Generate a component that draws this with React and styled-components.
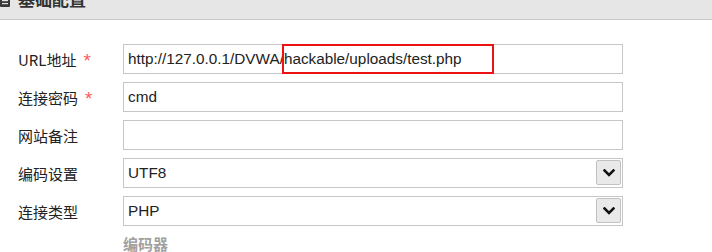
import React from "react";
import styled, { createGlobalStyle } from "styled-components";

const Global = createGlobalStyle`
  html, body { margin: 0; padding: 0; background: #fff; }
  body { font-family: "Liberation Sans", "Noto Sans CJK SC", sans-serif; color: #333; }
`;

const Page = styled.div`
  width: 712px;
  height: 252px;
  overflow: hidden;
  background: #fff;
`;

const Header = styled.div`
  height: 19px;
  border-bottom: 1px solid #c8c8c8;
  background: #e6e6e6;
  display: flex;
  align-items: flex-start;
  gap: 8px;
  overflow: hidden;
`;

const HeaderIcon = styled.svg`
  margin-top: -6px;
  flex: none;
`;

const Title = styled.div`
  margin-top: -11px;
  font-family: "Noto Sans CJK SC", sans-serif;
  font-size: 17px;
  font-weight: 700;
  line-height: 20px;
  color: #333;
`;

const Form = styled.div`
  padding-top: 24px;
  display: grid;
  grid-template-columns: 123px 500px;
  row-gap: 8px;
`;

const Label = styled.div`
  padding-left: 18px;
  height: 30px;
  display: flex;
  align-items: center;
  gap: 7px;
  font-family: "Noto Sans CJK SC", sans-serif;
  font-size: 15px;
  color: #222;
`;

const Star = styled.span`
  color: #ff5a5a;
  font-family: "Liberation Sans", sans-serif;
  font-size: 19px;
  margin-top: 4px;
`;

const Field = styled.div`
  position: relative;
  box-sizing: border-box;
  height: 30px;
  border: 1px solid #c6c6c6;
  background: #fff;
  display: flex;
  align-items: center;
  padding-left: 4px;
  font-family: "Liberation Sans", sans-serif;
  font-size: 15.3px;
  color: #222;
`;

const Highlight = styled.div`
  position: absolute;
  left: 158px;
  top: -1px;
  width: 212px;
  height: 30px;
  box-sizing: border-box;
  border: 2px solid #ee1111;
`;

const ArrowBtn = styled.div`
  position: absolute;
  right: 1px;
  top: 1px;
  width: 25px;
  height: 25px;
  box-sizing: border-box;
  border: 1px solid #c2c2c2;
  border-radius: 2px;
  background: #e9e9e9;
  display: flex;
  align-items: center;
  justify-content: center;
`;

const SubLabel = styled.div`
  grid-column: 2;
  margin-top: 0;
  font-family: "Noto Sans CJK SC", sans-serif;
  font-size: 15px;
  font-weight: 700;
  line-height: 20px;
  color: #a0a0a0;
`;

const Chevron = () => (
  <svg width="12" height="8" viewBox="0 0 12 8">
    <path d="M1.5 1.5 L6 6 L10.5 1.5" fill="none" stroke="#111" strokeWidth="2.6" strokeLinecap="square" />
  </svg>
);

const rows = [
  { label: "URL地址", req: true, value: "http://127.0.0.1/DVWA/hackable/uploads/test.php", highlight: true },
  { label: "连接密码", req: true, value: "cmd" },
  { label: "网站备注", value: "" },
  { label: "编码设置", value: "UTF8", select: true },
  { label: "连接类型", value: "PHP", select: true },
];

export default function App() {
  return (
    <Page>
      <Global />
      <Header>
        <HeaderIcon width="10" height="13" viewBox="0 0 10 13">
          <rect x="0" y="0" width="10" height="13" rx="1" fill="#3a3a3a" />
          <rect x="2" y="3" width="6" height="1.2" fill="#e6e6e6" />
          <rect x="2" y="6" width="6" height="1.2" fill="#e6e6e6" />
          <rect x="2" y="9" width="6" height="1.2" fill="#e6e6e6" />
        </HeaderIcon>
        <Title>基础配置</Title>
      </Header>
      <Form>
        {rows.map((r) => (
          <React.Fragment key={r.label}>
            <Label>
              {r.label}
              {r.req && <Star>*</Star>}
            </Label>
            <Field>
              {r.value}
              {r.highlight && <Highlight />}
              {r.select && (
                <ArrowBtn>
                  <Chevron />
                </ArrowBtn>
              )}
            </Field>
          </React.Fragment>
        ))}
        <SubLabel>编码器</SubLabel>
      </Form>
    </Page>
  );
}
